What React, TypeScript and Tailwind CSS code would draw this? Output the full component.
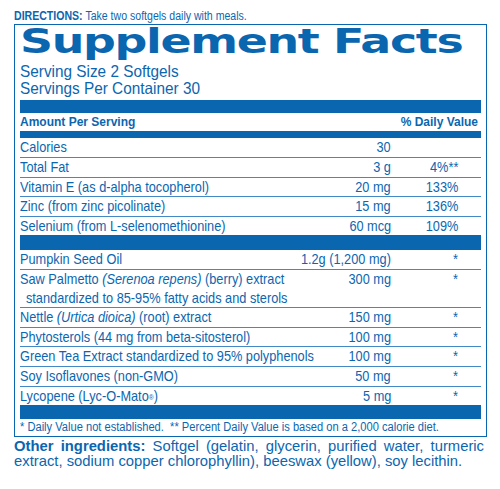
import React from "react";

const F = "font-['Liberation_Sans','Arial',sans-serif]";

type Row = { name: React.ReactNode; amt: string; dv: string; last?: boolean };

const rows1: Row[] = [
  { name: "Calories", amt: "30", dv: "" },
  { name: "Total Fat", amt: "3 g", dv: "4%**" },
  { name: "Vitamin E (as d-alpha tocopherol)", amt: "20 mg", dv: "133%" },
  { name: "Zinc (from zinc picolinate)", amt: "15 mg", dv: "136%" },
  { name: "Selenium (from L-selenomethionine)", amt: "60 mcg", dv: "109%", last: true },
];

const rows2: Row[] = [
  { name: "Pumpkin Seed Oil", amt: "1.2g (1,200 mg)", dv: "*" },
  {
    name: (
      <>
        Saw Palmetto <i>(Serenoa repens)</i> (berry) extract
        <br />
        <span className="pl-[7px]">standardized to 85-95% fatty acids and sterols</span>
      </>
    ),
    amt: "300 mg",
    dv: "*",
  },
  { name: <>Nettle <i>(Urtica dioica)</i> (root) extract</>, amt: "150 mg", dv: "*" },
  { name: "Phytosterols (44 mg from beta-sitosterol)", amt: "100 mg", dv: "*" },
  { name: "Green Tea Extract standardized to 95% polyphenols", amt: "100 mg", dv: "*" },
  { name: "Soy Isoflavones (non-GMO)", amt: "50 mg", dv: "*" },
  {
    name: (
      <>
        Lycopene (Lyc-O-Mato<sup className="text-[8px] relative -top-[1px]">®</sup>)
      </>
    ),
    amt: "5 mg",
    dv: "*",
    last: true,
  },
];

function Rows({ rows }: { rows: Row[] }) {
  return (
    <div>
      {rows.map((r, i) => (
        <div
          key={i}
          className={`flex items-start text-[15px] leading-[18.6px] ${r.last ? "" : "border-b border-[#4389c6]"}`}
        >
          <div className="flex-1 min-w-0">
            <span className="inline-block whitespace-nowrap origin-left scale-x-[0.85]">{r.name}</span>
          </div>
          <div className="w-[110px] text-right">
            <span className="inline-block whitespace-nowrap origin-right scale-x-[0.85]">{r.amt}</span>
          </div>
          <div className="w-[67px] text-right">
            <span className="inline-block whitespace-nowrap origin-right scale-x-[0.85]">{r.dv}</span>
          </div>
          <div className="w-[23px]" />
        </div>
      ))}
    </div>
  );
}

export default function App() {
  return (
    <div className={`w-[500px] h-[489px] bg-white text-[#0b66b0] ${F} overflow-hidden`}>
      <div className="pl-[14px] pt-[9px] text-[12px] leading-[15px] h-[24px]">
        <span className="inline-block whitespace-nowrap origin-left scale-x-[0.88]">
          <span className="font-bold">DIRECTIONS:</span> Take two softgels daily with meals.
        </span>
      </div>
      <div className="ml-[14px] w-[473px] border-[1.5px] border-[#0b66b0] px-[5px]">
        <div className="h-[38px]">
          <div className="font-['DejaVu_Sans',sans-serif] font-bold text-[34px] leading-[32px] tracking-[-1px] origin-left scale-x-[1.35] whitespace-nowrap">
            Supplement Facts
          </div>
        </div>
        <div className="text-[16.5px] leading-[16.7px]">
          <div>
            <span className="inline-block whitespace-nowrap origin-left scale-x-[0.93]">Serving Size 2 Softgels</span>
          </div>
          <div>
            <span className="inline-block whitespace-nowrap origin-left scale-x-[0.93]">Servings Per Container 30</span>
          </div>
        </div>
        <div className="mt-[4px] h-[13px] bg-[#0b66b0]" />
        <div className="flex justify-between h-[18px] text-[12px] leading-[18px] font-bold pr-[3px]">
          <span>Amount Per Serving</span>
          <span>% Daily Value</span>
        </div>
        <div className="h-[7px] bg-[#0b66b0]" />
        <Rows rows={rows1} />
        <div className="h-[15px] bg-[#0b66b0]" />
        <Rows rows={rows2} />
        <div className="h-[14px] bg-[#0b66b0]" />
        <div className="text-[12.5px] leading-[17px]">
          <span className="inline-block whitespace-nowrap origin-left scale-x-[0.89]">
            * Daily Value not established.&nbsp; ** Percent Daily Value is based on a 2,000 calorie diet.
          </span>
        </div>
      </div>
      <div className="pl-[14px] w-[484px] text-[14.8px] leading-[15px] pt-[2px]">
        <div className="text-justify [text-align-last:justify]">
          <span className="font-bold">Other ingredients:</span> Softgel (gelatin, glycerin, purified water, turmeric
        </div>
        <div>extract, sodium copper chlorophyllin), beeswax (yellow), soy lecithin.</div>
      </div>
    </div>
  );
}
